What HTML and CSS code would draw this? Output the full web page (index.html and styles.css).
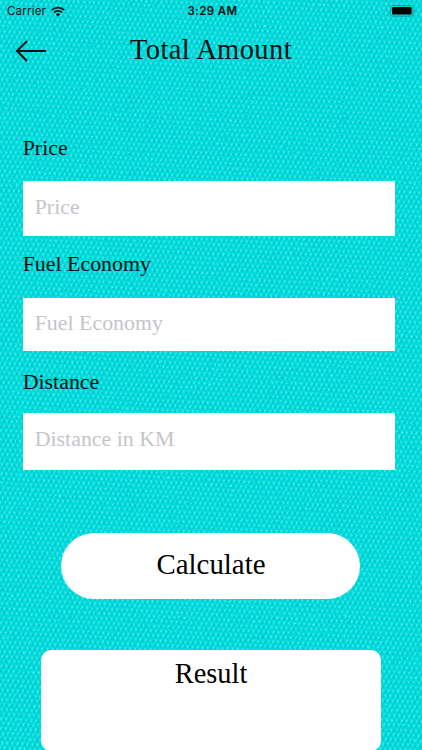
FILE: index.html
```html
<!DOCTYPE html>
<html lang="en">
  <head>
    <meta charset="UTF-8" />
    <title>Total Amount</title>
    <link rel="stylesheet" href="styles.css">
  </head>
  <body>
    <svg class="fabric" width="422" height="750" aria-hidden="true">
      <defs>
        <pattern id="weave" width="5" height="9.6" patternUnits="userSpaceOnUse" patternTransform="rotate(3)">
          <rect width="5" height="9.6" fill="#03dadb" />
          <path d="M.9 3.6L1.8 1.4M3.4 8.4L4.3 6.2" stroke="#45f3ef" stroke-width="1.5" />
          <path d="M3.2 4.3L4 2.2M.8 9.1L1.6 7" stroke="#00c2c8" stroke-width="1.6" />
        </pattern>
        <filter id="grain" x="0" y="0" width="100%" height="100%" color-interpolation-filters="sRGB">
          <feTurbulence type="fractalNoise" baseFrequency=".12 .16" numOctaves="2" seed="4" />
          <feDisplacementMap in="SourceGraphic" scale="2.4" xChannelSelector="R" yChannelSelector="G" />
        </filter>
      </defs>
      <rect x="-5" y="-5" width="432" height="760" fill="url(#weave)" filter="url(#grain)" />
    </svg>

    <div class="screen">
      <div class="status">
        <div class="carrier">
          <span>Carrier</span>
          <svg width="14" height="11" viewBox="0 0 14 11">
            <path d="M.8 4.1a8.9 8.9 0 0 1 12.4 0M3 6.5a5.8 5.8 0 0 1 8 0" fill="none" stroke="#021616" stroke-width="1.8" />
            <path d="M4.9 8.4a3 3 0 0 1 4.2 0L7 10.5z" fill="#021616" />
          </svg>
        </div>
        <div class="time">3:29 AM</div>
        <svg class="battery" width="26" height="12" viewBox="0 0 26 12">
          <rect x=".5" y=".5" width="22.6" height="10.6" rx="2.6" fill="none" stroke="#049c9c" />
          <rect x="2" y="2" width="19.6" height="7.6" rx="1.2" />
          <path d="M24.2 4q1.6 1.8 0 3.6z" fill="#046d6d" />
        </svg>
      </div>

      <header class="header">
        <a class="back" href="#" aria-label="Back">
          <svg width="32" height="24" viewBox="0 0 32 24">
            <path d="M31 12H2M12 2L2 12l10 10" fill="none" stroke="#021616" stroke-width="2" />
          </svg>
        </a>
        <h1>Total Amount</h1>
      </header>

      <form class="form">
        <div class="field price">
          <label for="price">Price</label>
          <input id="price" type="text" placeholder="Price" />
        </div>
        <div class="field economy">
          <label for="economy">Fuel Economy</label>
          <input id="economy" type="text" placeholder="Fuel Economy" />
        </div>
        <div class="field distance">
          <label for="distance">Distance</label>
          <input id="distance" type="text" placeholder="Distance in KM" />
        </div>
        <button class="calculate" type="button">Calculate</button>
      </form>

      <div class="result">Result</div>
    </div>
  </body>
</html>
```
FILE: styles.css
```css
* {
  box-sizing: border-box;
}

body {
  margin: 0;
  height: 750px;
  overflow: hidden;
  background: #03dadb;
  color: #021010;
  font-family: Palatino, "Liberation Serif", serif;
}

/* woven cloth behind the whole screen */
.fabric {
  position: absolute;
  top: 0;
  left: 0;
}

.screen {
  position: relative;
  width: 422px;
  height: 750px;
  overflow: hidden;
}

.status {
  display: grid;
  grid-template-columns: 1fr auto 1fr;
  align-items: center;
  height: 22px;
  padding: 0 6px 0 7px;
  font-family: Inter, sans-serif;
  font-size: 11.5px;
}

.carrier {
  display: flex;
  align-items: center;
  gap: 5px;
  letter-spacing: 0.2px;
}

.time {
  padding-left: 2px;
  font-weight: 600;
  letter-spacing: 0.4px;
}

.battery {
  justify-self: end;
}

.header {
  display: grid;
  grid-template-columns: 60px 1fr 60px;
  align-items: center;
  height: 55px;
}

.back {
  padding: 3px 0 0 15px;
}

.back svg {
  display: block;
}

h1 {
  margin: 0;
  font-size: 28.5px;
  font-weight: normal;
  letter-spacing: 0.4px;
  line-height: 55px;
  text-align: center;
}

.form {
  padding: 56px 27px 0 22.7px;
}

.field label {
  display: block;
  font-size: 21.9px;
  line-height: 30px;
}

.field input {
  display: block;
  width: 100%;
  padding: 0 12px 3px;
  border: 0;
  border-radius: 0;
  background: #fff;
  font-family: inherit;
  font-size: 21.9px;
}

.field input::placeholder {
  color: #c5c5ca;
}

.price input {
  height: 55px;
  margin-top: 17.5px;
}

.economy {
  margin-top: 13px;
}

.economy input {
  height: 53px;
  margin-top: 19px;
}

.distance {
  margin-top: 16.5px;
}

.distance input {
  height: 57px;
  margin-top: 15.5px;
  padding-bottom: 5px;
}

.calculate {
  display: block;
  width: 299px;
  height: 66px;
  margin: 63.5px 0 0 38.8px;
  padding: 0 0 4px;
  border: 0;
  border-radius: 33px;
  background: #fff;
  color: #000;
  font-family: inherit;
  font-size: 28.9px;
}

.result {
  width: 340px;
  height: 101px;
  margin: 51px auto 0;
  border-radius: 10px;
  background: #fff;
  color: #000;
  font-size: 28.4px;
  line-height: 47px;
  text-align: center;
}
```
